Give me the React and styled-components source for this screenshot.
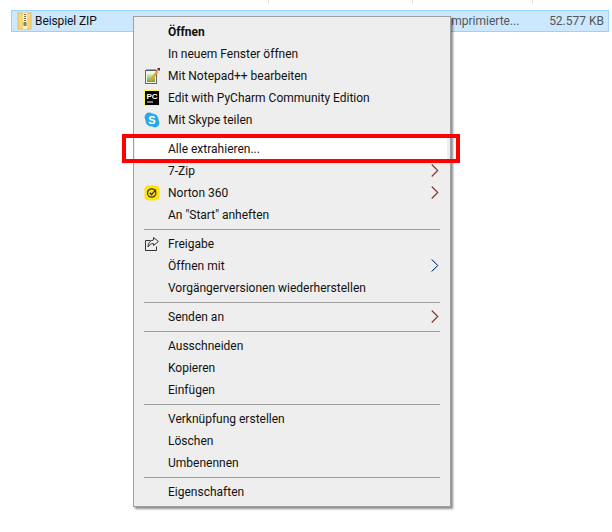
import React from "react";
import styled, { createGlobalStyle } from "styled-components";

const Global = createGlobalStyle`
  html, body { margin: 0; padding: 0; background: #fff; }
  body { font-family: Roboto, "Noto Sans", "Liberation Sans", sans-serif; font-size: 12px; color: #000; }
`;
const Page = styled.div`
  position: relative;
  width: 612px;
  height: 532px;
  overflow: hidden;
  background: #fff;
`;
const Header = styled.div`
  display: flex;
  height: 4px;
  margin-bottom: 6px;
`;
const HeaderCell = styled.div`
  width: ${p => p.$w}px;
  flex: none;
  border-right: 1px solid #e5e5e5;
  box-sizing: border-box;
`;
const FileRow = styled.div`
  display: flex;
  align-items: center;
  box-sizing: border-box;
  height: 22px;
  margin: 0 3px 0 11px;
  padding: 0 0 1px 5px;
  background: #cce8ff;
  border: 1px solid #99d1ff;
`;
const FileName = styled.span`
  margin-left: 2px;
  width: 402px;
  color: #111;
  letter-spacing: -0.1px;
`;
const FileType = styled.span`
  width: 92px;
  color: #555;
  white-space: nowrap;
`;
const FileSize = styled.span`
  flex: 1;
  text-align: right;
  padding-right: 4px;
  color: #555;
`;
const Menu = styled.div`
  position: absolute;
  left: 133px;
  top: 16px;
  width: 318px;
  box-sizing: border-box;
  padding: 4px 1px 3px 1px;
  background: #eeeeee;
  border: 1px solid #a0a0a0;
  box-shadow: 2px 2px 2px rgba(0,0,0,.45);
`;
const Row = styled.div`
  display: flex;
  align-items: center;
  box-sizing: border-box;
  height: 22px;
  padding: 0 0 1px 33px;
  position: relative;
  white-space: nowrap;
  background: ${p => (p.$hot ? "#fff" : "transparent")};
  font-weight: ${p => (p.$bold ? 700 : 400)};
  color: #111;
  ${p => p.$hot && "margin-right: 2px;"}
`;
const IconSlot = styled.span`
  position: absolute;
  left: 9px;
  top: 3px;
  width: 16px;
  height: 16px;
  display: block;
  svg { display: block; }
`;
const ArrowSlot = styled.span`
  position: absolute;
  right: 10px;
  top: 4px;
  width: 8px;
  height: 13px;
  svg { display: block; }
`;
const Separator = styled.div`
  height: 1px;
  margin: 3px 9px 3px 9px;
  background: #a0a0a0;
`;
const Highlight = styled.div`
  position: absolute;
  left: 122px;
  top: 134px;
  width: 338px;
  height: 29px;
  box-sizing: border-box;
  border: 4px solid #ff0000;
`;

const Zip = () => (
  <svg width="16" height="18" viewBox="0 0 16 18" style={{ marginTop: 1 }}>
    <rect x="1" y="1" width="13" height="16" fill="#f6d67c" stroke="#e6bd62" strokeWidth="1" />
    <rect x="6" y="1" width="4" height="16" fill="#fdf0c4" />
    <path d="M7 2h2v1H7zM7 4h2v1H7zM7 6h2v1H7zM7 8h2v1H7z" fill="#7d7050" />
    <rect x="6.5" y="10" width="3" height="4" fill="#8e8260" />
  </svg>
);
const Notepad = () => (
  <svg width="16" height="16" viewBox="0 0 16 16">
    <defs>
      <linearGradient id="npGreen" x1="0" y1="0" x2="0" y2="1">
        <stop offset="0" stopColor="#e8ecc0" />
        <stop offset="1" stopColor="#4fae3a" />
      </linearGradient>
    </defs>
    <rect x="1.5" y="2.5" width="11" height="13" fill="#f4f4ea" stroke="#666" />
    <path d="M3 1v2M5 1v2M7 1v2M9 1v2M11 1v2" stroke="#555" />
    <rect x="3" y="6" width="8" height="8" fill="url(#npGreen)" />
    <path d="M6 12l6.5-9 1.6 1.1-6.5 9-2 .9z" fill="#f5a623" stroke="#c77a10" strokeWidth=".4" />
    <rect x="13.5" y="0" width="2.5" height="2.5" fill="#8a1f1f" />
  </svg>
);
const PyCharm = () => (
  <svg width="16" height="16" viewBox="0 0 16 16">
    <rect x="0" y="0" width="16" height="16" fill="#fcf84a" />
    <rect x="1" y="1" width="14" height="14" fill="#000" />
    <text x="2.4" y="9" fontSize="8" fontWeight="700" fill="#fff" fontFamily="Liberation Sans, sans-serif">PC</text>
    <rect x="3" y="11.5" width="6" height="1" fill="#fff" />
  </svg>
);
const Skype = () => (
  <svg width="16" height="16" viewBox="0 0 16 16">
    <circle cx="5" cy="5" r="4.4" fill="#29a8e6" />
    <circle cx="11" cy="11" r="4.4" fill="#29a8e6" />
    <circle cx="8" cy="8" r="6.6" fill="#29a8e6" />
    <text x="8" y="12" fontSize="11" fontWeight="700" textAnchor="middle" fill="#fff" fontFamily="Liberation Sans, sans-serif">S</text>
  </svg>
);
const Norton = () => (
  <svg width="16" height="16" viewBox="0 0 16 16">
    <rect x="0.5" y="0.5" width="15" height="15" rx="4" fill="#ffe01b" />
    <circle cx="7.7" cy="8" r="4.2" fill="none" stroke="#3a3a20" strokeWidth="1.2" />
    <path d="M5.8 7.8l1.7 1.8L12 4.6" fill="none" stroke="#3a3a20" strokeWidth="1.4" />
  </svg>
);
const Share = () => (
  <svg width="16" height="16" viewBox="0 0 16 16" fill="none" stroke="#333">
    <path d="M6.5 4.5h-5v10h11v-4" />
    <path d="M9.5 1.5l5 4-5 4V7.5C7 7.5 5 9 4 11c0-4 2-6.5 5.5-7z" fill="#eee" />
  </svg>
);
const Arrow = ({ blue }) => (
  <svg width="8" height="13" viewBox="0 0 8 13" fill="none">
    {blue ? (
      <>
        <path d="M1.2 0.5l6 6-6 6" stroke="#4a9fe8" strokeWidth="1" />
        <path d="M0.5 0.5l6 6-6 6" stroke="#1f4f8a" strokeWidth="1" />
      </>
    ) : (
      <>
        <path d="M1.3 0.5l6 6-6 6" stroke="#4a9fe8" strokeWidth=".6" opacity=".6" />
        <path d="M0.7 0.5l6 6-6 6" stroke="#a0301c" strokeWidth="1.1" />
      </>
    )}
  </svg>
);

const groups = [
  [
    { t: "Öffnen", bold: true },
    { t: "In neuem Fenster öffnen" },
    { t: "Mit Notepad++ bearbeiten", icon: <Notepad /> },
    { t: "Edit with PyCharm Community Edition", icon: <PyCharm /> },
    { t: "Mit Skype teilen", icon: <Skype /> },
  ],
  [
    { t: "Alle extrahieren...", hot: true },
    { t: "7-Zip", arrow: true },
    { t: "Norton 360", icon: <Norton />, arrow: true },
    { t: 'An "Start" anheften' },
  ],
  [
    { t: "Freigabe", icon: <Share /> },
    { t: "Öffnen mit", arrow: true, blue: true },
    { t: "Vorgängerversionen wiederherstellen" },
  ],
  [{ t: "Senden an", arrow: true }],
  [{ t: "Ausschneiden" }, { t: "Kopieren" }, { t: "Einfügen" }],
  [{ t: "Verknüpfung erstellen" }, { t: "Löschen" }, { t: "Umbenennen" }],
  [{ t: "Eigenschaften" }],
];

export default function App() {
  return (
    <Page>
      <Global />
      <Header>
        <HeaderCell $w={269} />
        <HeaderCell $w={144} />
        <HeaderCell $w={120} />
      </Header>
      <FileRow>
        <Zip />
        <FileName>Beispiel ZIP</FileName>
        <FileType>Komprimierte...</FileType>
        <FileSize>52.577 KB</FileSize>
      </FileRow>
      <Menu>
        {groups.map((g, i) => (
          <React.Fragment key={i}>
            {i > 0 && <Separator />}
            {g.map(it => (
              <Row key={it.t} $bold={it.bold} $hot={it.hot}>
                {it.icon && <IconSlot>{it.icon}</IconSlot>}
                {it.t}
                {it.arrow && (
                  <ArrowSlot>
                    <Arrow blue={it.blue} />
                  </ArrowSlot>
                )}
              </Row>
            ))}
          </React.Fragment>
        ))}
      </Menu>
      <Highlight />
    </Page>
  );
}
